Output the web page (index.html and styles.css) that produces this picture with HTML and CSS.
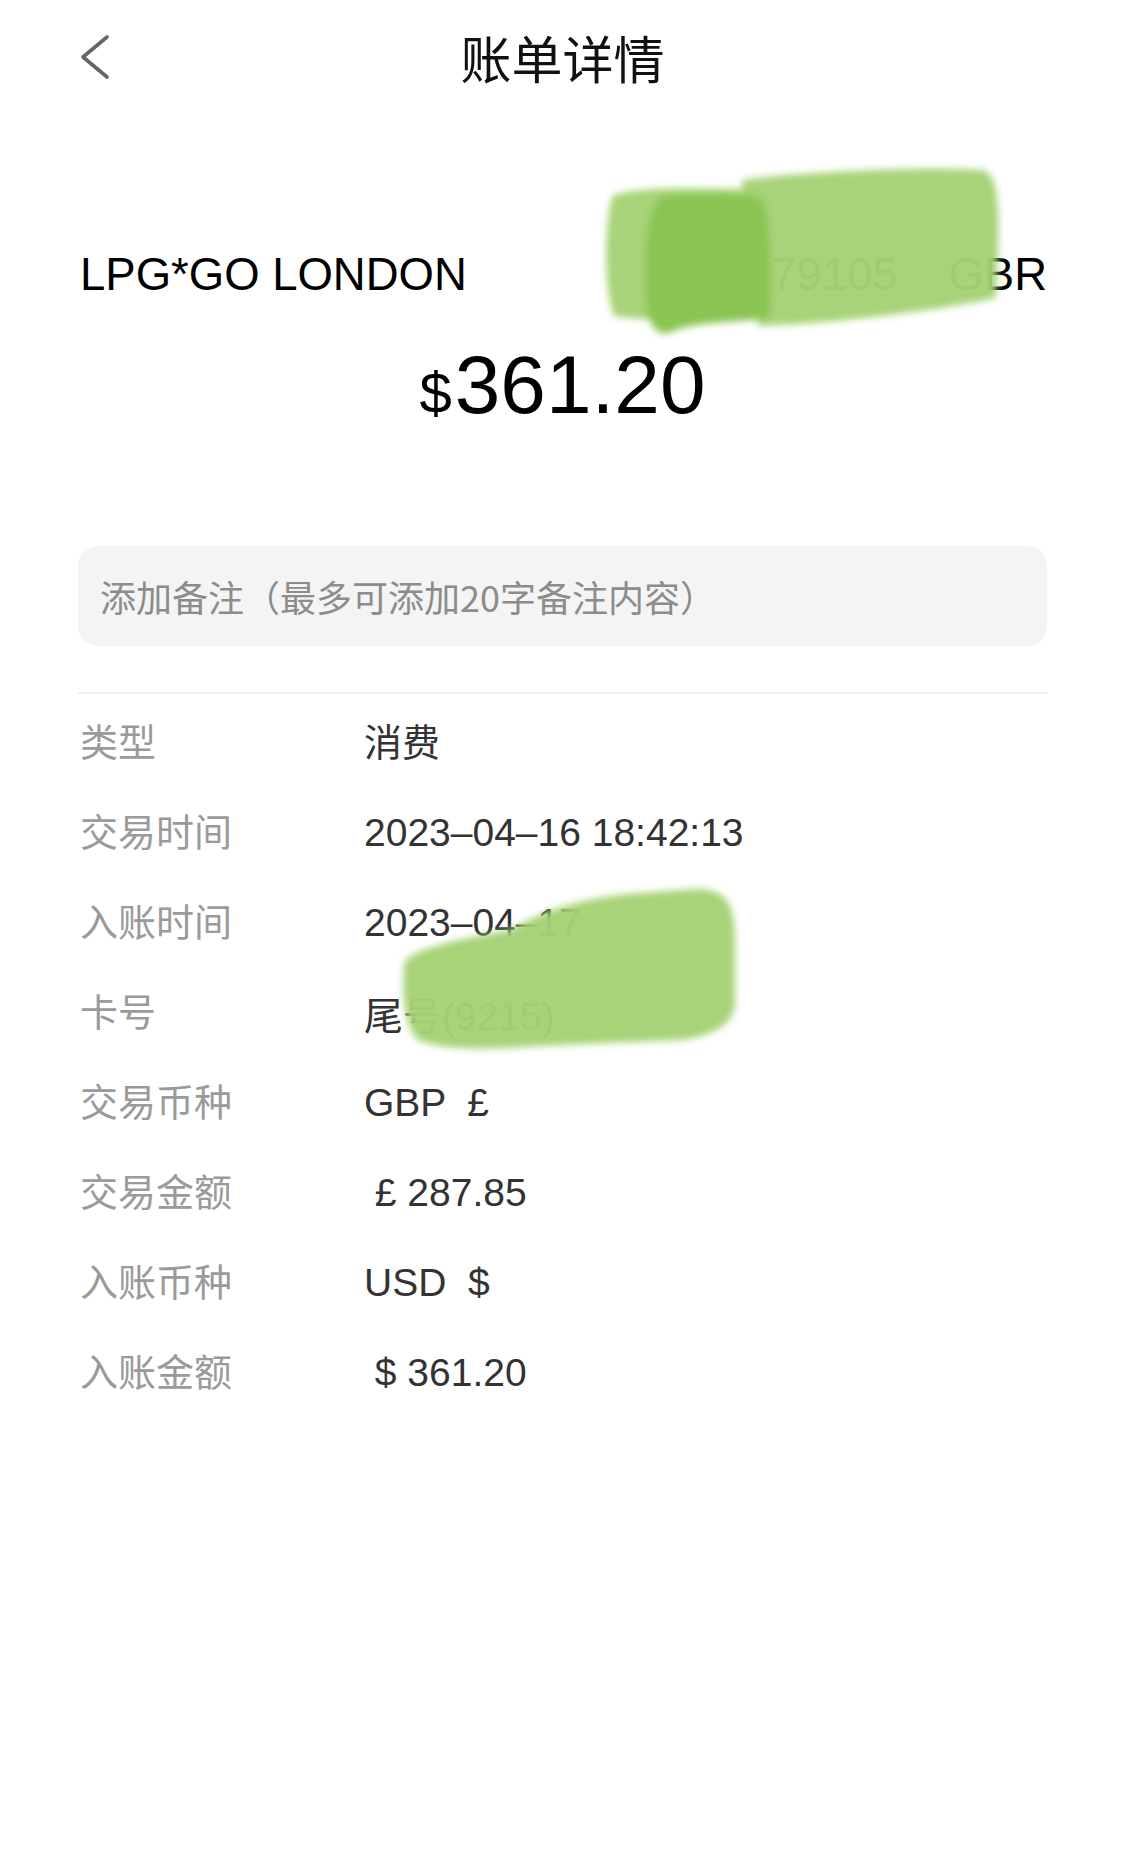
FILE: index.html
```html
<!DOCTYPE html>
<html lang="zh-CN">
<head>
<meta charset="utf-8">
<title>账单详情</title>
<link rel="stylesheet" href="styles.css">
</head>
<body>
<div class="page">
  <header class="nav">
    <svg class="back" width="30" height="48" viewBox="0 0 30 48" aria-hidden="true">
      <polyline points="27,4 3,24 27,44"/>
    </svg>
    <h1 class="title">账单详情</h1>
    <span class="nav-spacer"></span>
  </header>

  <section class="summary">
    <div class="merchant">
      <span>LPG*GO LONDON</span>
      <span class="loc">0   79105    GBR</span>
    </div>
    <div class="amount"><span class="cur">$</span>361.20</div>
  </section>

  <div class="note">添加备注（最多可添加20字备注内容）</div>
  <div class="divider"></div>

  <dl class="details">
    <div class="row"><dt>类型</dt><dd class="cjk">消费</dd></div>
    <div class="row"><dt>交易时间</dt><dd>2023–04–16 18:42:13</dd></div>
    <div class="row"><dt>入账时间</dt><dd>2023–04–17</dd></div>
    <div class="row"><dt>卡号</dt><dd>尾号(9215)</dd></div>
    <div class="row"><dt>交易币种</dt><dd>GBP  £</dd></div>
    <div class="row"><dt>交易金额</dt><dd> £ 287.85</dd></div>
    <div class="row"><dt>入账币种</dt><dd>USD  $</dd></div>
    <div class="row"><dt>入账金额</dt><dd> $ 361.20</dd></div>
  </dl>

  <svg class="redact" width="1125" height="1851" viewBox="0 0 1125 1851" aria-hidden="true">
    <defs>
      <filter id="soft" x="-10%" y="-10%" width="120%" height="120%">
        <feGaussianBlur stdDeviation="3.5"/>
      </filter>
    </defs>
    <g filter="url(#soft)">
      <path class="g-light" d="M 612 196 C 640 186, 700 188, 760 190 L 770 318 C 720 322, 660 322, 614 316 C 604 290, 604 230, 612 196 Z"/>
      <path class="g-light" d="M 742 180 C 800 172, 920 166, 982 170 C 996 172, 1000 200, 998 250 L 996 298 C 960 306, 880 318, 800 324 L 760 326 C 748 310, 744 250, 742 180 Z"/>
      <path class="g-dark" d="M 662 196 C 700 192, 740 192, 760 198 C 770 204, 772 260, 770 318 C 740 322, 700 322, 676 330 C 664 338, 648 334, 646 300 C 644 260, 644 210, 662 196 Z"/>
      <path class="g-light" d="M 404 965 C 406 948, 470 938, 510 930 C 545 910, 580 898, 640 893 L 695 889 C 724 888, 734 902, 735 935 L 735 1005 C 734 1022, 716 1036, 680 1040 L 540 1046 C 490 1050, 440 1050, 418 1040 C 404 1025, 402 995, 404 965 Z"/>
    </g>
  </svg>
</div>
</body>
</html>
```

FILE: styles.css
```css
* {
  box-sizing: border-box;
}

html, body {
  margin: 0;
  padding: 0;
  background: #ffffff;
}

body {
  font-family: "Liberation Sans", "Noto Sans CJK SC", sans-serif;
  color: #000;
}

.page {
  position: relative;
  width: 1125px;
  min-height: 1851px;
  padding: 0 78px;
  overflow: hidden;
}

.nav {
  height: 114px;
  display: grid;
  grid-template-columns: 1fr auto 1fr;
  align-items: center;
}

.back {
  margin-left: 2px;
  display: block;
}

.back polyline {
  fill: none;
  stroke: #666666;
  stroke-width: 3.6;
  stroke-linecap: round;
  stroke-linejoin: round;
}

.title {
  margin: 0;
  font-family: "Noto Sans CJK SC", sans-serif;
  font-size: 51px;
  font-weight: 400;
  line-height: 60px;
  color: #111;
}

.summary {
  margin-top: 139px;
}

.merchant {
  display: flex;
  justify-content: space-between;
  font-size: 45.5px;
  line-height: 44px;
  padding-left: 2px;
  color: #000;
}

.merchant .loc {
  white-space: pre;
  color: #000;
}

.amount {
  margin-top: 47px;
  text-align: center;
  font-size: 82px;
  line-height: 82px;
  color: #000;
}

.amount .cur {
  font-size: 58px;
  margin-right: 3px;
}

.note {
  margin-top: 112px;
  height: 100px;
  border-radius: 20px;
  background: #f4f4f4;
  padding-left: 22px;
  display: flex;
  align-items: center;
  font-family: "Noto Sans CJK SC", sans-serif;
  font-size: 36px;
  color: #8c8c8c;
}

.divider {
  margin-top: 46px;
  height: 2px;
  background: #f0f0f0;
}

.details {
  margin: 0;
}

.row {
  display: grid;
  grid-template-columns: 286px 1fr;
  align-items: center;
  height: 90px;
}

.row dt {
  font-family: "Noto Sans CJK SC", sans-serif;
  font-size: 38px;
  color: #9a9a9a;
  padding-left: 2px;
}

.row dd {
  margin: 0;
  padding-top: 8px;
  font-size: 39px;
  color: #333333;
  white-space: pre;
}

.row dd.cjk {
  padding-top: 0;
  font-family: "Noto Sans CJK SC", sans-serif;
  font-size: 38px;
}

.redact {
  position: absolute;
  top: 0;
  left: 0;
  pointer-events: none;
}

.g-light {
  fill: #a5d275;
  fill-opacity: 0.97;
}

.g-dark {
  fill: #8bc452;
  fill-opacity: 0.98;
}
```
